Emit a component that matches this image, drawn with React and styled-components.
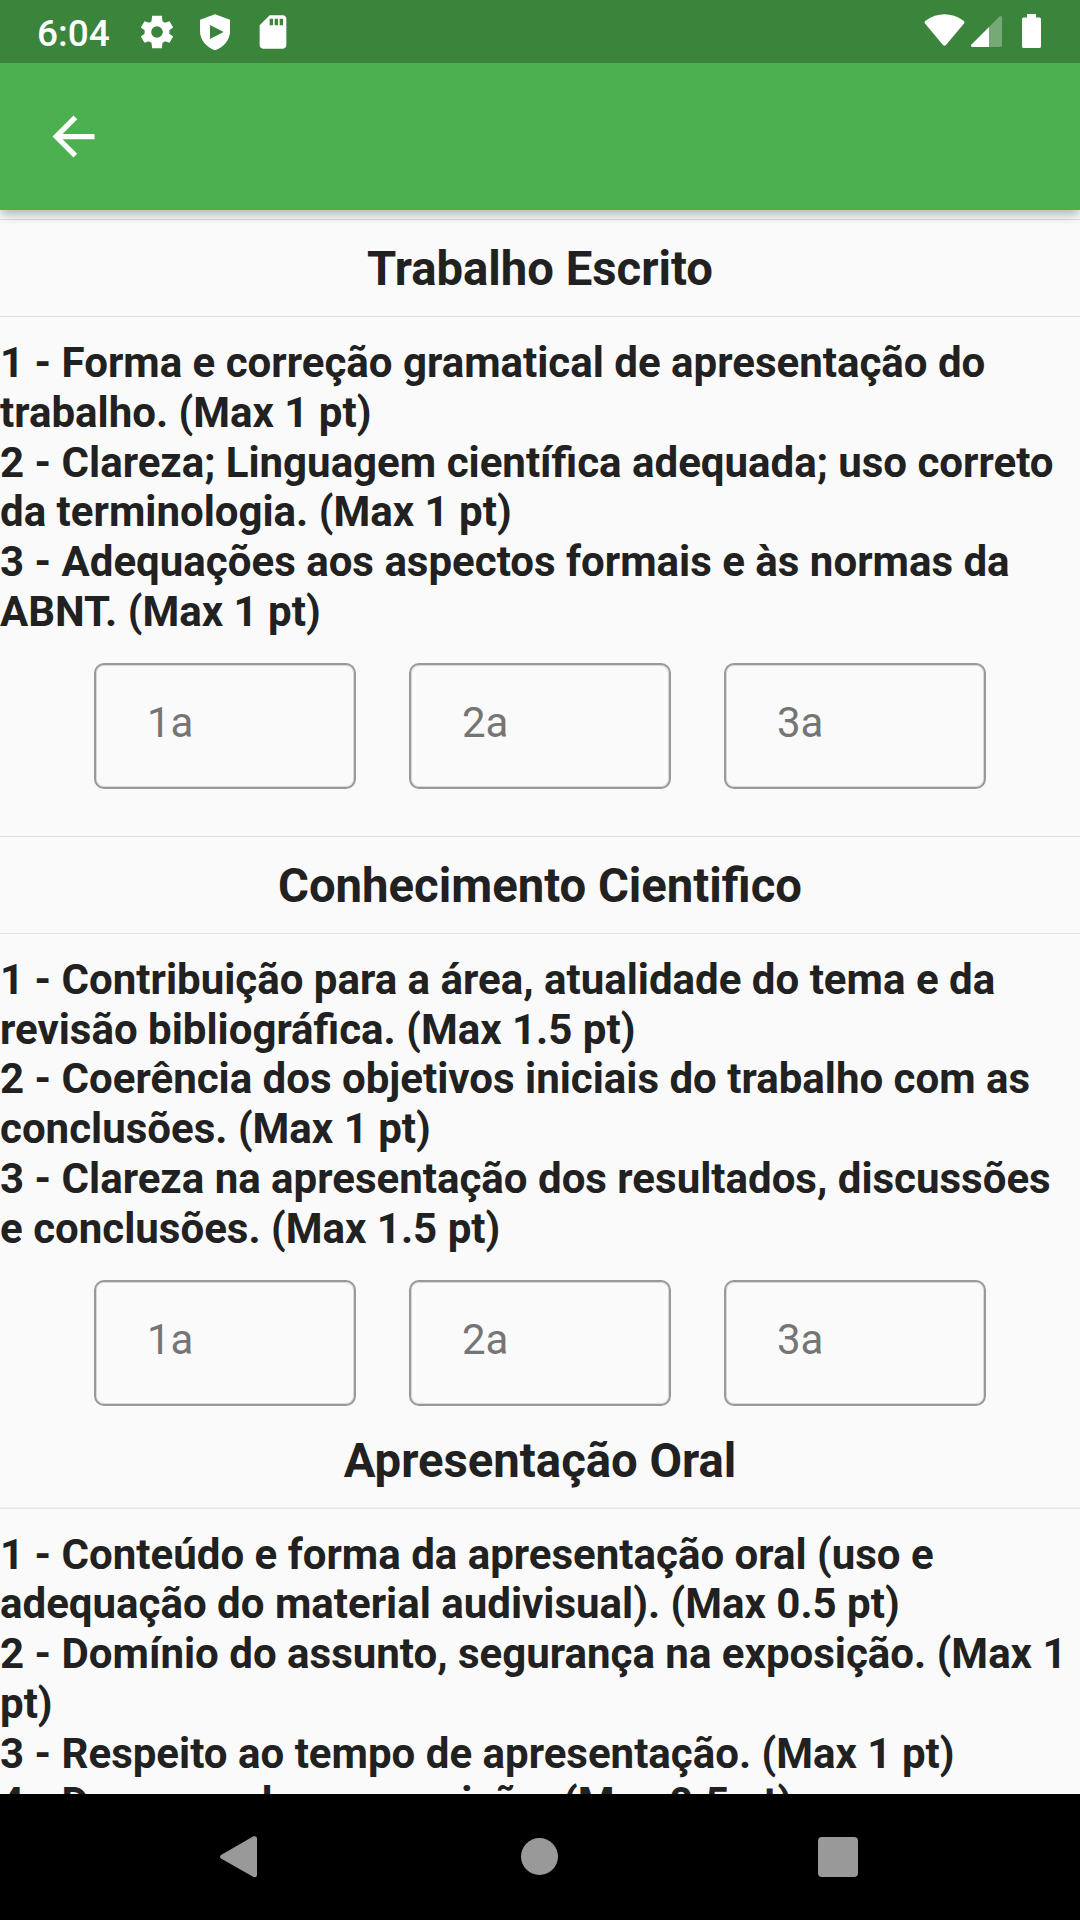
import React from 'react';
import styled, { createGlobalStyle } from 'styled-components';

const Global = createGlobalStyle`
  * { box-sizing: border-box; }
  body { margin: 0; background: #fafafa; overflow: hidden; }
`;
const Screen = styled.div`
  width: 1080px; height: 1920px; display: flex; flex-direction: column;
  font-family: Roboto, sans-serif; color: #212121; background: #fafafa; overflow: hidden;
`;
const StatusBar = styled.header`
  height: 63px; flex: none; background: #3a843c; color: #fff; display: flex; align-items: center;
  padding: 0 33px 0 37px; font-size: 37px; font-weight: 500; z-index: 2;
`;
const Time = styled.span`width: 100px; padding-top: 3px;`;
const StatusIcon = styled.svg`width: ${p => p.$w}px; height: ${p => p.$w}px; margin-right: ${p => p.$gap}px; fill: #fff; flex: none;`;
const Indicators = styled.svg`width: 123px; height: 63px; margin-left: auto; fill: #fff;`;
const AppBar = styled.div`
  height: 147px; flex: none; background: #4caf50; display: flex; align-items: center; padding-left: 42px;
  box-shadow: 0 5px 10px -1px rgba(0,0,0,.16), 0 4px 12px rgba(0,0,0,.16); z-index: 1;
`;
const Content = styled.main`flex: 1; min-height: 0; overflow: hidden; padding-top: 9px;`;
const Section = styled.section`height: ${p => p.$height}px;`;
const Title = styled.h1`
  margin: 0; height: ${p => p.$top ? 98 : 97}px; font-size: 47.25px; line-height: 99px; font-weight: 700; text-align: center;
  border-top: ${p => p.$top ? '1px solid #e1e1e1' : '0'}; border-bottom: 1px solid ${p => p.$top ? '#e1e1e1' : '#e6e6e6'};
  box-shadow: ${p => p.$top ? 'none' : 'inset 0 -1px 0 #f0f0f0'};
`;
const Criteria = styled.div`
  height: 319.2px; padding-top: ${p => p.$pad}px; font-size: 42.03px; line-height: 49.7px; font-weight: 700; white-space: nowrap;
`;
const Line = styled.div``;
const Fields = styled.div`display: flex; gap: 53px; padding: 26.800px 94px 0;`;
const Field = styled.div`
  width: 262px; flex: none; height: 126px; border: 2px solid #999; border-radius: 10px; padding-left: 51px;
  box-shadow: inset 0 0 0 1px rgba(0,0,0,.13);
  font-size: 42px; line-height: 116px; color: #757575;
`;
const NavBar = styled.nav`
  height: 126px; flex: none; background: #000; display: flex; align-items: center; justify-content: space-between;
  padding: 0 220px;
`;
const NavIcon = styled.svg`width: 42px; height: 44px; fill: #999; overflow: visible;`;

const sections = [
  { title: 'Trabalho Escrito', top: true, height: 617, pad: 21.2, fields: true, lines: ['1 - Forma e correção gramatical de apresentação do', 'trabalho. (Max 1 pt)', '2 - Clareza; Linguagem científica adequada; uso correto', 'da terminologia. (Max 1 pt)', '3 - Adequações aos aspectos formais e às normas da', 'ABNT. (Max 1 pt)'] },
  { title: 'Conhecimento Cientifico', top: true, height: 576, pad: 21, fields: true, lines: ['1 - Contribuição para a área, atualidade do tema e da', 'revisão bibliográfica. (Max 1.5 pt)', '2 - Coerência dos objetivos iniciais do trabalho com as', 'conclusões. (Max 1 pt)', '3 - Clareza na apresentação dos resultados, discussões', 'e conclusões. (Max 1.5 pt)'] },
  { title: 'Apresentação Oral', top: false, height: 500, pad: 20.7, fields: false, lines: ['1 - Conteúdo e forma da apresentação oral (uso e', 'adequação do material audivisual). (Max 0.5 pt)', '2 - Domínio do assunto, segurança na exposição. (Max 1', 'pt)', '3 - Respeito ao tempo de apresentação. (Max 1 pt)', '4 - Desempenho na arguição. (Max 0.5 pt)'] },
];

export default function App() {
  return <><Global /><Screen>
    <StatusBar>
      <Time>6:04</Time>
      <StatusIcon viewBox="0 0 24 24" $w={40} $gap={18}><path d="M19.400 13a7.800 7.800 0 0 0 0-2l2.300-1.700-2.200-3.800-2.700 1a7.300 7.300 0 0 0-1.500-.9L14.900 2.200H9.100l-.4 3.400a7.300 7.300 0 0 0-1.500.9l-2.700-1-2.200 3.800L4.600 11a7.800 7.800 0 0 0 0 2l-2.300 1.700 2.200 3.800 2.700-1c.5.4 1 .7 1.500.9l.4 3.400h5.800l.4-3.400c.5-.2 1-.5 1.500-.9l2.700 1 2.200-3.800zM12 15.500a3.500 3.500 0 1 1 0-7 3.500 3.500 0 0 1 0 7z" /></StatusIcon>
      <StatusIcon viewBox="0 0 24 24" $w={40} $gap={18}><path fillRule="evenodd" d="M12 1.300 3 4.700v7c0 5 3.840 9.540 9 11.300 5.160-1.760 9-6.300 9-11.300v-7zM9 7.800l8.200 4.200L9 16.200z" /></StatusIcon>
      <StatusIcon viewBox="0 0 24 24" $w={40} $gap={0}><path d="M18 2h-8L4 8v12c0 1.100.9 2 2 2h12c1.100 0 2-.9 2-2V4c0-1.100-.9-2-2-2zm-6 6h-2V4h2zm3 0h-2V4h2zm3 0h-2V4h2z" /></StatusIcon>
      <Indicators viewBox="924 0 123 63">
        <path d="M943 45 925 23.500Q923.800 22 925.500 20.700Q944.500 8 963.500 20.700Q965.200 22 964 23.500L946 45Q944.500 46.500 943 45Z" />
        <path opacity=".3" d="M989 27 999 17Q1002 14.500 1002 18V45Q1002 47 1000 47H989Z" />
        <path d="M989 27V47H973Q970 47 971.500 44.500Z" />
        <path d="M1027 14h9v3.500h3.500q1.500 0 1.500 1.500v27.500q0 1.500-1.500 1.500h-16q-1.500 0-1.500-1.500V19q0-1.500 1.500-1.500h3.500z" />
      </Indicators>
    </StatusBar>
    <AppBar><StatusIcon viewBox="0 0 24 24" $w={63} $gap={0}><path d="M20 11H7.830l5.590-5.590L12 4l-8 8 8 8 1.410-1.410L7.830 13H20z" /></StatusIcon></AppBar>
    <Content>{sections.map(s => <Section key={s.title} $height={s.height}>
      <Title $top={s.top}>{s.title}</Title>
      <Criteria $pad={s.pad}>{s.lines.map(l => <Line key={l}>{l}</Line>)}</Criteria>
      {s.fields && <Fields><Field>1a</Field><Field>2a</Field><Field>3a</Field></Fields>}
    </Section>)}</Content>
    <NavBar>
      <NavIcon viewBox="0 0 42 44"><path d="M1 20 33.500 1.300Q37 .5 37 3.500V40Q37 43 33.500 42L1 23.500Q-.8 21.700 1 20Z" /></NavIcon>
      <NavIcon viewBox="0 0 42 44"><circle cx="20.500" cy="21.500" r="18.500" /></NavIcon>
      <NavIcon viewBox="0 0 42 44"><rect x="0" y="2" width="40" height="40" rx="4" /></NavIcon>
    </NavBar>
  </Screen></>;
}
